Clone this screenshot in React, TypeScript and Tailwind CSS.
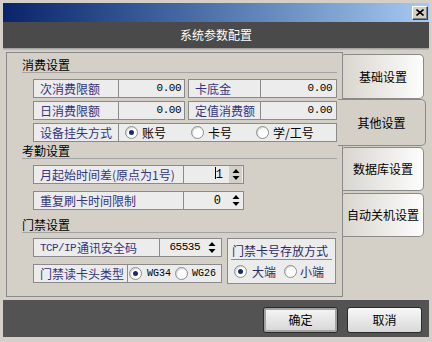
import React from "react";

const CJK = '"Noto Sans CJK SC", "Noto Sans", sans-serif';
const MONO = '"Liberation Mono", "Noto Sans CJK SC", monospace';

function Radio({ checked }: { checked?: boolean }) {
  return (
    <span className="w-[13px] h-[13px] rounded-full border border-[#8e8e8e] bg-white flex items-center justify-center shrink-0 shadow-[inset_1px_1px_1px_rgba(0,0,0,0.18)]">
      {checked && <span className="w-[5px] h-[5px] rounded-full bg-[#1a2a72]" />}
    </span>
  );
}

function SpinArrows({ hover }: { hover?: boolean }) {
  return (
    <div
      className={
        "w-[13px] h-[17px] flex items-center justify-center shrink-0 " +
        (hover ? "bg-[#d4d0c8]" : "")
      }
    >
      <svg width="8" height="13" viewBox="0 0 8 13">
        <path d="M4 1 L7.5 5 L0.5 5 Z" fill="#000" />
        <path d="M0.5 8 L7.5 8 L4 12 Z" fill="#000" />
      </svg>
    </div>
  );
}

const labelCls =
  "h-full border border-[#8a8a8a] bg-[#ececec] pl-[6px] flex items-center text-[12px] leading-[14px] text-[#34347f] whitespace-nowrap shrink-0";
const valueCls =
  "h-full border border-l-0 border-[#8a8a8a] bg-[#ececec] flex items-center justify-end text-[11px] tracking-[-0.5px] text-black shrink-0";

function Heading({ children }: { children: React.ReactNode }) {
  return (
    <div className="h-[16px] border-b border-[#a3a3a3] text-[12px] leading-[15px] text-black">
      {children}
    </div>
  );
}

function Tab({ children, h, mt }: { children: React.ReactNode; h: string; mt: string }) {
  return (
    <div
      className={
        "w-[81px] rounded-r-[5px] rounded-tl-[2px] border border-l-0 border-[#8a8a8a] bg-gradient-to-r from-[#d9d6cf] to-[#fdfdfd] flex items-center justify-center text-[12px] text-black " +
        h +
        " " +
        mt
      }
    >
      {children}
    </div>
  );
}

export default function App() {
  return (
    <div
      className="w-[432px] h-[342px] bg-[#d4d0c8] pt-[3px] px-[3px] pb-[5px] flex flex-col overflow-hidden"
      style={{ fontFamily: CJK }}
    >
      {/* title bar */}
      <div className="h-[19px] shrink-0 bg-gradient-to-r from-[#0a246a] to-[#a6caf0] flex items-center justify-end pr-[1px]">
        <div className="w-[16px] h-[14px] bg-[#d4d0c8] border border-t-white border-l-white border-r-[#404040] border-b-[#404040] shadow-[inset_-1px_-1px_0_#808080] flex items-center justify-center">
          <svg width="8" height="7" viewBox="0 0 8 7">
            <path d="M0.5 0.5 L7.5 6.5 M7.5 0.5 L0.5 6.5" stroke="#000" strokeWidth="1.6" />
          </svg>
        </div>
      </div>

      {/* dark header */}
      <div className="h-[26px] shrink-0 bg-[#4a4a4a] flex items-center justify-center text-white text-[12px] leading-[14px]">
        系统参数配置
      </div>
      <div className="h-[2px] shrink-0 bg-gradient-to-b from-[#9a9a9a] to-[#c6c3bc]" />

      {/* content */}
      <div className="h-[250px] shrink-0 flex bg-[#d4d0c8]">
        <div className="ml-[3px] mt-[2px] w-[337px] h-[245px] border border-[#8a8a8a] flex flex-col pl-[15px] pr-[5px] pt-[4px]">
          {/* 消费设置 */}
          <Heading>消费设置</Heading>
          <div className="pl-[11px] mt-[6px] flex flex-col gap-[3px]">
            <div className="flex h-[19px]">
              <div className={labelCls + " w-[86px]"}>次消费限额</div>
              <div className={valueCls + " w-[66px] pr-[3px]"} style={{ fontFamily: MONO }}>
                0.00
              </div>
              <div className={labelCls + " w-[73px] ml-[3px]"}>卡底金</div>
              <div className={valueCls + " flex-1 pr-[4px]"} style={{ fontFamily: MONO }}>
                0.00
              </div>
            </div>
            <div className="flex h-[19px]">
              <div className={labelCls + " w-[86px]"}>日消费限额</div>
              <div className={valueCls + " w-[66px] pr-[3px]"} style={{ fontFamily: MONO }}>
                0.00
              </div>
              <div className={labelCls + " w-[73px] ml-[3px]"}>定值消费额</div>
              <div className={valueCls + " flex-1 pr-[4px]"} style={{ fontFamily: MONO }}>
                0.00
              </div>
            </div>
            <div className="flex h-[19px]">
              <div className={labelCls + " w-[86px]"}>设备挂失方式</div>
              <div className="flex-1 h-full border border-l-0 border-[#8a8a8a] bg-[#ececec] flex items-center pl-[6px] text-[12px] leading-[14px] text-black">
                <div className="w-[66px] flex items-center gap-[4px]">
                  <Radio checked />
                  <span>账号</span>
                </div>
                <div className="w-[65px] flex items-center gap-[4px]">
                  <Radio />
                  <span>卡号</span>
                </div>
                <div className="flex items-center gap-[4px]">
                  <Radio />
                  <span>学/工号</span>
                </div>
              </div>
            </div>
          </div>

          {/* 考勤设置 */}
          <div className="mt-[1px]">
            <Heading>考勤设置</Heading>
          </div>
          <div className="pl-[11px] mt-[6px] flex flex-col gap-[7px]">
            <div className="flex h-[19px]">
              <div className={labelCls + " w-[151px]"}>月起始时间差(原点为1号)</div>
              <div className={valueCls + " w-[60px] pr-[1px]"} style={{ fontFamily: MONO }}>
                <span className="relative text-[12px] tracking-normal">
                  1
                  <span className="absolute left-[-1px] top-[1px] w-[1px] h-[12px] bg-black" />
                </span>
                <div className="ml-[6px]">
                  <SpinArrows hover />
                </div>
              </div>
            </div>
            <div className="flex h-[19px]">
              <div className={labelCls + " w-[151px]"}>重复刷卡时间限制</div>
              <div className={valueCls + " w-[60px] pr-[1px]"} style={{ fontFamily: MONO }}>
                <span className="text-[12px] tracking-normal">0</span>
                <div className="ml-[8px]">
                  <SpinArrows />
                </div>
              </div>
            </div>
          </div>

          {/* 门禁设置 */}
          <div className="mt-[7px]">
            <Heading>门禁设置</Heading>
          </div>
          <div className="pl-[11px] mt-[5px] flex">
            <div className="flex flex-col gap-[7px]">
              <div className="flex h-[19px]">
                <div className={labelCls + " w-[127px]"}>
                  <span className="text-[11px] tracking-[-0.6px] mr-[1px]" style={{ fontFamily: MONO }}>
                    TCP/IP
                  </span>
                  通讯安全码
                </div>
                <div className={valueCls + " w-[62px] pr-[3px]"} style={{ fontFamily: MONO }}>
                  <span>65535</span>
                  <div className="ml-[5px]">
                    <SpinArrows />
                  </div>
                </div>
              </div>
              <div className="flex h-[19px]">
                <div className={labelCls + " w-[95px]"}>门禁读卡头类型</div>
                <div className="w-[94px] h-full border border-l-0 border-[#8a8a8a] bg-[#ececec] flex items-center pl-[1px] text-black">
                  <Radio checked />
                  <span className="ml-[5px] text-[10px] w-[24px]" style={{ fontFamily: MONO }}>
                    WG34
                  </span>
                  <span className="ml-[4px]">
                    <Radio />
                  </span>
                  <span className="ml-[4px] text-[10px]" style={{ fontFamily: MONO }}>
                    WG26
                  </span>
                </div>
              </div>
            </div>
            <div className="ml-[5px] w-[109px] h-[46px] border border-[#8a8a8a] bg-[#ececec] px-[3px] pt-[5px] flex flex-col">
              <div className="h-[16px] border-b border-[#8a8a8a] pl-[1px] text-[12px] leading-[14px] text-[#2a2a66] whitespace-nowrap">
                门禁卡号存放方式
              </div>
              <div className="flex-1 flex items-center pl-[3px] text-[12px] leading-[14px] text-[#2a2a66]">
                <Radio checked />
                <span className="ml-[5px] w-[24px]">大端</span>
                <span className="ml-[8px]">
                  <Radio />
                </span>
                <span className="ml-[3px]">小端</span>
              </div>
            </div>
          </div>
        </div>

        {/* tabs */}
        <div className="mt-[4px] w-[81px] flex flex-col">
          <Tab h="h-[45px]" mt="mt-0">
            基础设置
          </Tab>
          <div className="relative z-10 -ml-[5px] w-[88px] h-[47px] rounded-r-[5px] border border-l-0 border-[#8a8a8a] bg-[#d4d0c8] flex items-center justify-center text-[12px] text-black">
            其他设置
          </div>
          <Tab h="h-[44px]" mt="mt-[1px]">
            数据库设置
          </Tab>
          <Tab h="h-[44px]" mt="mt-[2px]">
            自动关机设置
          </Tab>
        </div>
      </div>

      {/* footer */}
      <div className="h-[37px] shrink-0 bg-[#535353] flex justify-end items-start pt-[7px] pr-[7px] gap-[9px]">
        <div className="w-[75px] h-[26px] rounded-[3px] border border-[#2a2a2a] bg-gradient-to-b from-[#f6f6f6] to-[#d6d6d6] shadow-[inset_0_0_0_2px_#a3a3a3] flex items-center justify-center text-[12px] text-black">
          确定
        </div>
        <div className="w-[75px] h-[26px] rounded-[3px] border border-[#2a2a2a] bg-gradient-to-b from-[#f8f8f8] to-[#d8d8d8] flex items-center justify-center text-[12px] text-black">
          取消
        </div>
      </div>
    </div>
  );
}
